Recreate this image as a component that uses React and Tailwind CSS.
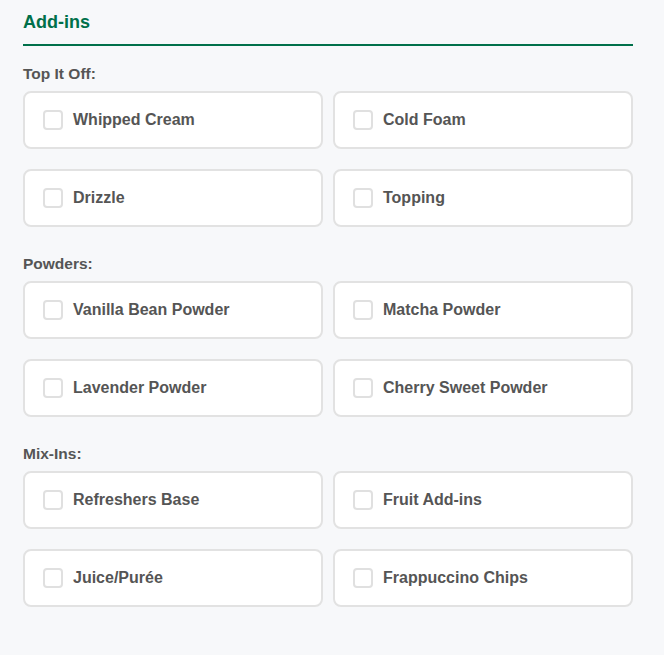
import React from "react";

const sections = [
  { title: "Top It Off:", items: ["Whipped Cream", "Cold Foam", "Drizzle", "Topping"] },
  { title: "Powders:", items: ["Vanilla Bean Powder", "Matcha Powder", "Lavender Powder", "Cherry Sweet Powder"] },
  { title: "Mix-Ins:", items: ["Refreshers Base", "Fruit Add-ins", "Juice/Purée", "Frappuccino Chips"] },
];

function Option({ label }) {
  return (
    <label className="flex h-[58px] items-center rounded-[8px] border-2 border-[#e2e2e2] bg-white pl-[18px]">
      <span className="h-5 w-5 shrink-0 rounded-[4px] border-2 border-[#e0e0e0] bg-white" />
      <span className="ml-[10px] text-[16px] font-bold text-[#555555]">{label}</span>
    </label>
  );
}

export default function App() {
  return (
    <div
      className="min-h-screen bg-[#f7f8fa]"
      style={{ fontFamily: '"Liberation Sans", Arial, sans-serif' }}
    >
      <div className="ml-[23px] w-[610px] pt-[12px]">
        <h2 className="border-b-2 border-[#00704a] pb-[11px] text-[18px] font-bold leading-[21px] text-[#00704a]">
          Add-ins
        </h2>
        <div className="mt-[19px] flex flex-col gap-[28px]">
          {sections.map((s) => (
            <div key={s.title}>
              <div className="mb-[8px] text-[15.5px] font-bold leading-[18px] text-[#555555]">
                {s.title}
              </div>
              <div className="grid grid-cols-2 gap-x-[10px] gap-y-[20px]">
                {s.items.map((it) => (
                  <Option key={it} label={it} />
                ))}
              </div>
            </div>
          ))}
        </div>
      </div>
    </div>
  );
}
